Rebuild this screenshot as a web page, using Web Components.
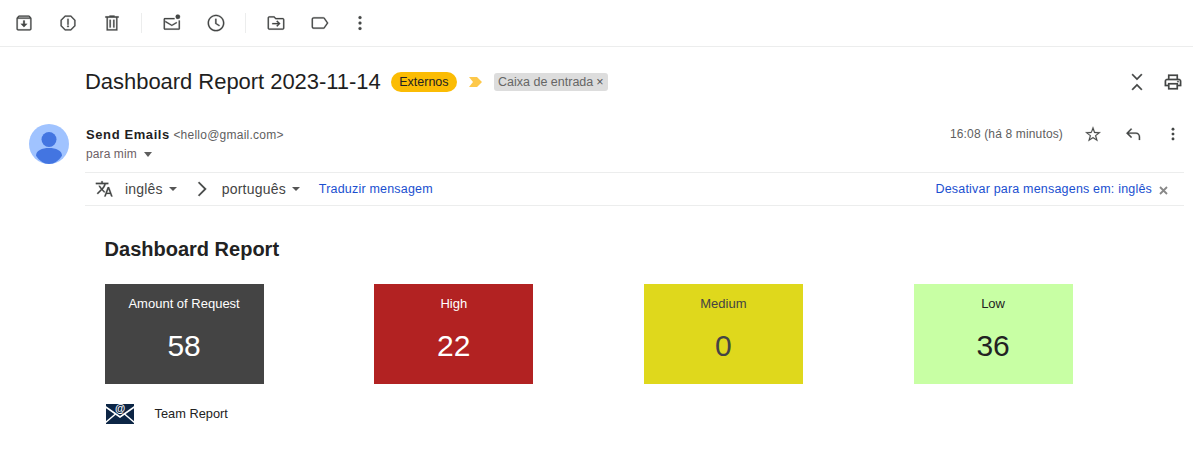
<!DOCTYPE html>
<html>
<head>
<meta charset="utf-8">
<title>Dashboard Report</title>
<style>
    html, body { margin: 0; background: #fff; }
    body { font-family: "Liberation Sans", Arial, sans-serif; color: #222; height: 458px; overflow: hidden; }
</style>
</head>
<body>
<gm-toolbar></gm-toolbar>
<gm-subject subject="Dashboard Report 2023-11-14"></gm-subject>
<gm-sender name="Send Emails" address="<hello@gmail.com>" time="16:08 (há 8 minutos)"></gm-sender>
<gm-translate></gm-translate>
<report-body heading="Dashboard Report">
    <report-card label="Amount of Request" value="58" style="--bg:#444444;--fg:#ffffff"></report-card>
    <report-card label="High" value="22" style="--bg:#b22222;--fg:#ffffff"></report-card>
    <report-card label="Medium" value="0" style="--bg:#dfd81c;--fg:#444444"></report-card>
    <report-card label="Low" value="36" style="--bg:#c8ffa4;--fg:#222222"></report-card>
</report-body>

<script>
//all icons on a 24x24 viewBox
const ICONS = {
    archive: '<path d="M20.5 5.5 19 3.7c-.3-.4-.7-.7-1.2-.7H6.2c-.5 0-.9.3-1.2.7L3.5 5.5c-.3.3-.5.8-.5 1.2V19c0 1.1.9 2 2 2h14c1.1 0 2-.9 2-2V6.700c0-.4-.2-.9-.5-1.200zM6.200 4.500h11.600l.8 1H5.400zM19.500 19.500h-15V7h15zM13 9h-2v4H8l4 4 4-4h-3z"/>',
    spam: '<path d="M15.700 3H8.300L3 8.300v7.400L8.300 21h7.400l5.300-5.300V8.300zm3.800 12.100-4.400 4.400H8.900l-4.400-4.400V8.900l4.400-4.400h6.200l4.400 4.400z"/><circle cx="12" cy="16" r="1.100"/><path d="M11.200 7h1.600v7h-1.600z"/>',
    trash: '<path d="M15 4V3H9v1H4v1.600h1.500V21h13V5.600H20V4zM17 19.500H7V5.600h10z"/><path d="M9 8h1.600v9.500H9zM13.400 8H15v9.500h-1.600z"/>',
    unread: '<circle cx="19" cy="4.500" r="2.700"/><path d="M20 9v9.500H3.500V7.500H15V6H3.500C2.700 6 2 6.700 2 7.500v11c0 .8.7 1.500 1.500 1.500H20c.8 0 1.500-.7 1.500-1.500V9z"/><path d="M11.800 14 4 9.400v1.700l7.800 4.600 6.300-3.700-.8-1.300z"/>',
    clock: '<path d="M12 2C6.500 2 2 6.500 2 12s4.500 10 10 10 10-4.500 10-10S17.500 2 12 2zm0 18.400c-4.600 0-8.400-3.800-8.400-8.400S7.400 3.600 12 3.600s8.400 3.800 8.400 8.400-3.800 8.400-8.400 8.400z"/><path d="M12.600 7H11v6l4.800 3 .8-1.300-4-2.500z"/>',
    move: '<path d="M20 6h-8l-2-2H4c-1.100 0-2 .9-2 2v12c0 1.100.9 2 2 2h16c1.100 0 2-.9 2-2V8c0-1.100-.9-2-2-2zm.5 12.500h-17v-13h5.900l2 2h9.100z"/><path d="m13.500 9-1.100 1.100 1.900 1.900H7.500v1.500h6.800l-1.900 1.900 1.100 1.100 3.800-3.800z"/>',
    label: '<path d="M17.600 5.800C17.200 5.300 16.600 5 16 5H4.500C3.100 5 2 6.100 2 7.500v9C2 17.900 3.100 19 4.500 19H16c.6 0 1.200-.3 1.600-.8L22 12zM16 17.500H4.500c-.6 0-1-.4-1-1v-9c0-.6.4-1 1-1H16c.2 0 .3.100.4.200l3.800 5.300-3.800 5.300c-.1.100-.2.200-.4.200z"/>',
    more: '<circle cx="12" cy="5.500" r="1.800"/><circle cx="12" cy="12" r="1.800"/><circle cx="12" cy="18.500" r="1.800"/>',
    collapse: '<path d="M5.600 3.400 6.900 2.100 12 7.200l5.100-5.100 1.300 1.300L12 9.800zM12 14.200l6.400 6.400-1.300 1.300-5.100-5.100-5.100 5.100-1.300-1.300z"/>',
    print: '<path d="M19 8h-1V3H6v5H5c-1.700 0-3 1.300-3 3v6h4v4h12v-4h4v-6c0-1.700-1.300-3-3-3zM7.800 4.800h8.400V8H7.800zM16.200 19.200H7.800V15h8.400zM20.200 15.200H18v-2H6v2H3.800V11c0-.7.5-1.200 1.200-1.200h14c.7 0 1.200.5 1.200 1.200z"/><circle cx="18" cy="11.500" r="1"/>',
    star: '<path d="m12 6.300 1.500 3.900.2.600h.6l4.200.2-3.300 2.600-.5.400.2.600 1.100 4-3.500-2.300-.5-.3-.5.300-3.500 2.300 1.100-4 .2-.6-.5-.4L5 11l4.200-.2h.6l.2-.6zM12 2 9.400 9.300 1.700 9.600l6.100 4.800-2.100 7.400L12 17.600l6.300 4.200-2.100-7.400 6.100-4.800-7.700-.3z"/>',
    reply: '<path d="M21.500 20h-1.800v-4.200c0-2.300-1.600-4-3.900-4H6.400l4.300 4.300-1.300 1.300L2.900 10.900l6.500-6.500 1.300 1.300L6.400 10h9.400c3.300 0 5.700 2.500 5.700 5.800z"/>',
    translate: '<path d="m11.900 15.100-2.500-2.500c1.700-1.900 2.900-4.100 3.600-6.400H16V4.400h-6.600V2.600H7.500v1.800H1v1.800h10.100C10.500 8 9.500 9.700 8.200 11.100 7.400 10.200 6.700 9.200 6.100 8.100H4.300c.7 1.500 1.600 2.900 2.700 4.200l-4.800 4.700 1.300 1.300 4.700-4.700 2.900 2.900z"/><path d="M17 9.700h-1.800L11 21h1.800l1.100-2.900h4.300l1.100 2.900h1.800zm-2.500 6.800 1.600-4.300 1.600 4.300z"/>',
    chevron: '<path d="M6 2.800 7.800 1l11 11-11 11L6 21.200 15.200 12z"/>'
};

const iconTemplate = document.createElement('template');
iconTemplate.innerHTML = `
    <style>
        :host { display: inline-flex; width: var(--size, 20px); height: var(--size, 20px); color: var(--icon-color, #444746); flex: none; }
        svg { width: 100%; height: 100%; fill: currentColor; stroke: currentColor; stroke-width: .25; display: block; }
    </style>
    <svg viewBox="0 0 24 24"></svg>
`;

//single icon, picked from ICONS by its name attribute
class GmIcon extends HTMLElement {
    constructor() {
        super();
        let shadowRoot = this.attachShadow({mode: 'open'});
        shadowRoot.appendChild(iconTemplate.content.cloneNode(true));
    }
    connectedCallback() {
        this.shadowRoot.querySelector('svg').innerHTML = ICONS[this.getAttribute('name')] || '';
    }
}
customElements.define('gm-icon', GmIcon);

//top bar with the message actions
class GmToolbar extends HTMLElement {
    constructor() {
        super();
        let shadowRoot = this.attachShadow({mode: 'open'});
        shadowRoot.innerHTML = `
            <style>
                :host { display: flex; align-items: center; box-sizing: border-box; height: 47px; border-bottom: 1px solid #eceded; padding: 0 0 0 14px; }
                gm-icon { margin-right: 24px; }
                .sep { width: 1px; height: 20px; background: #eceded; margin: 0 20px 0 -5px; }
                .last { margin-left: -4px; }
            </style>
            <gm-icon name="archive"></gm-icon>
            <gm-icon name="spam"></gm-icon>
            <gm-icon name="trash"></gm-icon>
            <span class="sep"></span>
            <gm-icon name="unread"></gm-icon>
            <gm-icon name="clock"></gm-icon>
            <span class="sep"></span>
            <gm-icon name="move"></gm-icon>
            <gm-icon name="label"></gm-icon>
            <gm-icon class="last" name="more"></gm-icon>
        `;
    }
}
customElements.define('gm-toolbar', GmToolbar);

//subject line with the label chips
class GmSubject extends HTMLElement {
    constructor() {
        super();
        let shadowRoot = this.attachShadow({mode: 'open'});
        shadowRoot.innerHTML = `
            <style>
                :host { display: flex; align-items: center; height: 28px; margin-top: 21px; padding: 0 10px 0 85px; }
                h1 { margin: 0; font: 400 22px/28px "Liberation Sans", Arial, sans-serif; letter-spacing: -.04px; color: #1f1f1f; white-space: nowrap; }
                .tag { margin-left: 10px; background: #fbbc04; color: #222; font-size: 12.5px; line-height: 20px; height: 20px; padding: 0 8.500px; border-radius: 10px; }
                .marker { margin: 0 12px; }
                .chip { display: flex; align-items: center; background: #dddddd; color: #666; font-size: 12.5px; height: 18px; padding: 0 4px; border-radius: 3px; white-space: nowrap; }
                .chip b { font-weight: 400; margin-left: 3px; color: #555; }
                .spacer { flex: 1; }
                gm-icon { --size: 20px; margin-left: 16px; }
            </style>
            <h1></h1>
            <span class="tag">Externos</span>
            <svg class="marker" width="13" height="10" viewBox="0 0 13 10"><path d="M0 0h8l5 5-5 5H0l4-5z" fill="#fdc84a"/></svg>
            <span class="chip">Caixa de entrada<b>×</b></span>
            <span class="spacer"></span>
            <gm-icon name="collapse"></gm-icon>
            <gm-icon name="print"></gm-icon>
        `;
    }
    connectedCallback() {
        this.shadowRoot.querySelector('h1').textContent = this.getAttribute('subject');
    }
}
customElements.define('gm-subject', GmSubject);

//sender row: avatar, name, address, time and the actions
class GmSender extends HTMLElement {
    constructor() {
        super();
        let shadowRoot = this.attachShadow({mode: 'open'});
        shadowRoot.innerHTML = `
            <style>
                :host { display: flex; align-items: flex-start; height: 48px; margin-top: 28px; padding-left: 29px; }
                .avatar { width: 40px; height: 40px; flex: none; }
                .who { flex: 1; margin-left: 17px; }
                .line { height: 20px; line-height: 20px; white-space: nowrap; }
                .name { font-size: 13px; font-weight: 700; color: #1f1f1f; letter-spacing: .6px; }
                .addr { font-size: 12px; color: #5e5e5e; letter-spacing: .24px; margin-left: -1px; }
                .to { display: flex; align-items: center; font-size: 12px; color: #6d5f66; letter-spacing: .1px; }
                .caret { width: 0; height: 0; border: 4px solid transparent; border-top: 5px solid #5e5e5e; border-bottom: 0; margin-left: 7px; }
                .side { display: flex; align-items: center; height: 20px; }
                .time { font-size: 12px; color: #5e5e5e; letter-spacing: .15px; margin-right: 21px; }
                gm-icon { --size: 18px; margin-right: 22px; }
                gm-icon:last-child { margin-right: 11px; }
            </style>
            <svg class="avatar" viewBox="0 0 40 40">
                <circle cx="20" cy="20" r="20" fill="#a0c3ff"/>
                <circle cx="20" cy="15.500" r="7.500" fill="#4375e1"/>
                <path d="M7 31.800C7 26.500 13 24 20 24s13 2.500 13 7.800C29.700 36.900 25.200 40 20 40S10.300 36.900 7 31.800z" fill="#4375e1"/>
            </svg>
            <div class="who">
                <div class="line"><span class="name"></span> <span class="addr"></span></div>
                <div class="line to">para mim<span class="caret"></span></div>
            </div>
            <div class="side">
                <span class="time"></span>
                <gm-icon name="star"></gm-icon>
                <gm-icon name="reply"></gm-icon>
                <gm-icon name="more"></gm-icon>
            </div>
        `;
    }
    connectedCallback() {
        let root = this.shadowRoot;
        root.querySelector('.name').textContent = this.getAttribute('name');
        root.querySelector('.addr').textContent = this.getAttribute('address');
        root.querySelector('.time').textContent = this.getAttribute('time');
    }
}
customElements.define('gm-sender', GmSender);

//translation strip under the sender
class GmTranslate extends HTMLElement {
    constructor() {
        super();
        let shadowRoot = this.attachShadow({mode: 'open'});
        shadowRoot.innerHTML = `
            <style>
                :host { display: flex; align-items: center; box-sizing: border-box; height: 34px; margin: 0 9px 0 85px; padding-left: 10px; border-top: 1px solid #eceded; border-bottom: 1px solid #eceded; font-size: 14px; color: #444; white-space: nowrap; }
                .lang { letter-spacing: .2px; }
                .caret { width: 0; height: 0; border: 4px solid transparent; border-top: 4px solid #555; border-bottom: 0; margin-left: 6px; }
                .chevron { --size: 16px; margin: 0 12px 0 17px; }
                .tr { --size: 20px; margin-right: 10px; }
                a { color: #1a4fd0; font-size: 12.5px; letter-spacing: .19px; text-decoration: none; }
                .first { margin-left: 19px; }
                .spacer { flex: 1; }
                .x { margin: 2px 16px 0 7px; }
            </style>
            <gm-icon class="tr" name="translate"></gm-icon>
            <span class="lang">inglês</span><span class="caret"></span>
            <gm-icon class="chevron" name="chevron"></gm-icon>
            <span class="lang">português</span><span class="caret"></span>
            <a class="first">Traduzir mensagem</a>
            <span class="spacer"></span>
            <a>Desativar para mensagens em: inglês</a>
            <svg class="x" width="9" height="9" viewBox="0 0 9 9"><path d="M1 1l7 7M8 1l-7 7" stroke="#888" stroke-width="1.800" fill="none"/></svg>
        `;
    }
}
customElements.define('gm-translate', GmTranslate);

//one coloured tile of the report
class ReportCard extends HTMLElement {
    constructor() {
        super();
        let shadowRoot = this.attachShadow({mode: 'open'});
        shadowRoot.innerHTML = `
            <style>
                :host { display: block; width: 159px; height: 100px; background: var(--bg); color: var(--fg); text-align: center; font-family: "Liberation Sans", Arial, sans-serif; }
                .label { font-size: 13px; line-height: 14px; padding-top: 13px; }
                .value { font-size: 30px; line-height: 34px; margin-top: 18px; }
            </style>
            <div class="label"></div>
            <div class="value"></div>
        `;
    }
    connectedCallback() {
        this.shadowRoot.querySelector('.label').textContent = this.getAttribute('label');
        this.shadowRoot.querySelector('.value').textContent = this.getAttribute('value');
    }
}
customElements.define('report-card', ReportCard);

//the mail content: heading, tiles and footer
class ReportBody extends HTMLElement {
    constructor() {
        super();
        let shadowRoot = this.attachShadow({mode: 'open'});
        shadowRoot.innerHTML = `
            <style>
                :host { display: block; padding: 31px 0 0 104.600px; font-family: "Liberation Sans", Arial, sans-serif; }
                h2 { margin: 0; font-size: 20px; line-height: 24px; font-weight: 700; color: #222; }
                .cards { display: grid; grid-template-columns: repeat(4, 159px); column-gap: 110.670px; margin-top: 23px; }
                .foot { display: flex; align-items: center; margin-top: 18px; font-size: 12.8px; color: #222; }
                .foot svg { margin-right: 20px; }
                .foot span { margin-bottom: 2px; }
            </style>
            <h2></h2>
            <div class="cards"><slot></slot></div>
            <div class="foot">
                <svg width="30" height="24" viewBox="0 0 30 24">
                    <path d="M1 2h28v20H1z" fill="#0c2545"/>
                    <path d="M0 4.500 15 15 30 4.500" fill="none" stroke="#fff" stroke-width="1.600"/>
                    <path d="M0 21 10.500 12M30 21 19.500 12" stroke="#fff" stroke-width="1.400"/>
                    <path d="M8 2h14v6l-7 5-7-5z" fill="#0c2545"/>
                    <text x="15" y="10" text-anchor="middle" font-size="10.500" font-weight="700" font-family="Liberation Sans" fill="#fff">@</text>
                </svg>
                <span>Team Report</span>
            </div>
        `;
    }
    connectedCallback() {
        this.shadowRoot.querySelector('h2').textContent = this.getAttribute('heading');
    }
}
customElements.define('report-body', ReportBody);
</script>
</body>
</html>
